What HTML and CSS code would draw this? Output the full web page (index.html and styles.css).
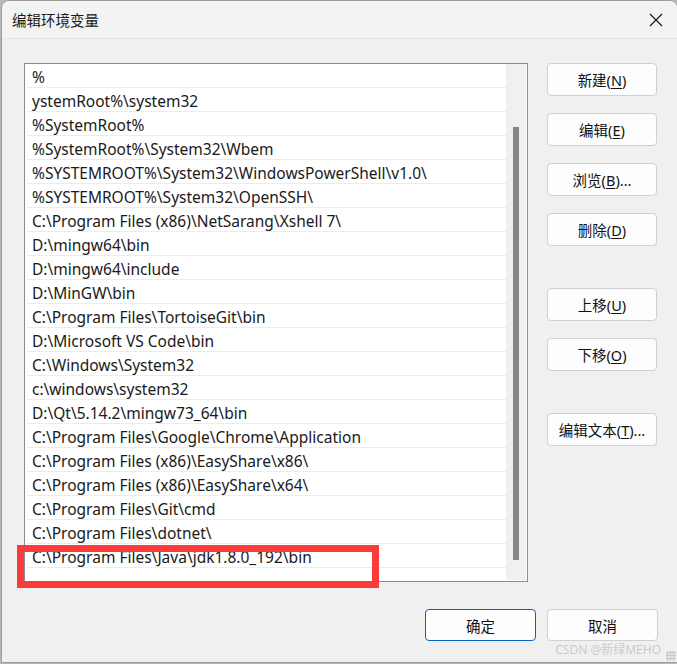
FILE: index.html
```html
<!DOCTYPE html>
<html lang="zh-CN">
<head>
  <meta charset="UTF-8" />
  <title>编辑环境变量</title>
  <link rel="stylesheet" href="styles.css">
</head>
<body>
  <div class="window">
    <div class="titlebar">
      <span class="title">编辑环境变量</span>
      <svg class="close" width="14" height="14" viewBox="0 0 14 14">
        <path d="M1 1 L13 13 M13 1 L1 13" stroke="#1a1a1a" stroke-width="1.2" fill="none" />
      </svg>
    </div>

    <div class="content">
      <div class="main">
        <div class="listbox">
          <div class="rows">
            <div class="row">%</div>
            <div class="row">ystemRoot%\system32</div>
            <div class="row">%SystemRoot%</div>
            <div class="row">%SystemRoot%\System32\Wbem</div>
            <div class="row">%SYSTEMROOT%\System32\WindowsPowerShell\v1.0\</div>
            <div class="row">%SYSTEMROOT%\System32\OpenSSH\</div>
            <div class="row">C:\Program Files (x86)\NetSarang\Xshell 7\</div>
            <div class="row">D:\mingw64\bin</div>
            <div class="row">D:\mingw64\include</div>
            <div class="row">D:\MinGW\bin</div>
            <div class="row">C:\Program Files\TortoiseGit\bin</div>
            <div class="row">D:\Microsoft VS Code\bin</div>
            <div class="row">C:\Windows\System32</div>
            <div class="row">c:\windows\system32</div>
            <div class="row">D:\Qt\5.14.2\mingw73_64\bin</div>
            <div class="row">C:\Program Files\Google\Chrome\Application</div>
            <div class="row">C:\Program Files (x86)\EasyShare\x86\</div>
            <div class="row">C:\Program Files (x86)\EasyShare\x64\</div>
            <div class="row">C:\Program Files\Git\cmd</div>
            <div class="row">C:\Program Files\dotnet\</div>
            <div class="row">C:\Program Files\Java\jdk1.8.0_192\bin</div>
          </div>
          <div class="scrollbar">
            <div class="thumb"></div>
          </div>
        </div>

        <div class="side">
          <div class="group">
            <button class="btn">新建(<u>N</u>)</button>
            <button class="btn">编辑(<u>E</u>)</button>
            <button class="btn">浏览(<u>B</u>)...</button>
            <button class="btn">删除(<u>D</u>)</button>
          </div>
          <div class="group">
            <button class="btn">上移(<u>U</u>)</button>
            <button class="btn">下移(<u>O</u>)</button>
          </div>
          <div class="group">
            <button class="btn">编辑文本(<u>T</u>)...</button>
          </div>
        </div>
      </div>

      <div class="footer">
        <button class="btn wide default">确定</button>
        <button class="btn wide">取消</button>
      </div>
    </div>

    <div class="highlight"></div>
    <div class="watermark">CSDN @新绿MEHO</div>
    <div class="grip"></div>
  </div>
</body>
</html>
```

FILE: styles.css
```css
body {
  margin: 0;
  padding: 0;
  background: #b8b8b8;
  font-family: "Noto Sans", "Noto Sans CJK SC", sans-serif;
  color: #1a1a1a;
}

.window {
  position: relative;
  box-sizing: border-box;
  width: 677px;
  height: 663px;
  margin-left: 1px;
  background: #f0f0f0;
  border: 1px solid #9c9c9c;
  border-radius: 8px 8px 0 0;
  overflow: hidden;
}

.titlebar {
  height: 37px;
  background: #f3f3f3;
  border-bottom: 1px solid #e6e6e6;
  display: flex;
  align-items: center;
  justify-content: space-between;
  padding: 0 14px 0 10px;
}

.title {
  font-family: "Noto Sans CJK SC", sans-serif;
  font-size: 14.5px;
}

.close {
  margin-top: 1px;
}

.content {
  padding: 24px 0 0 22px;
}

.main {
  display: flex;
  gap: 19px;
}

.listbox {
  box-sizing: border-box;
  width: 504px;
  height: 519px;
  border: 1px solid #8a8a9a;
  background: #fff;
  display: flex;
  padding: 0 1px 1px 1px;
}

.rows {
  flex: 1;
  padding-left: 1px;
}

.row {
  height: 23px;
  border-bottom: 1px solid #ececec;
  padding-left: 5px;
  font-size: 15.5px;
  line-height: 27px;
  white-space: nowrap;
  overflow: hidden;
}

.scrollbar {
  width: 20px;
  background: #f0f0f0;
}

.thumb {
  width: 6px;
  height: 433px;
  margin: 63px 0 0 7px;
  background: #858585;
}

.side {
  display: flex;
  flex-direction: column;
  gap: 42px;
}

.group {
  display: flex;
  flex-direction: column;
  gap: 17px;
}

.btn {
  box-sizing: border-box;
  width: 110px;
  height: 33px;
  border: 1px solid #d0d0d0;
  border-radius: 4px;
  background: #fdfdfd;
  font-family: "Noto Sans", "Noto Sans CJK SC", sans-serif;
  font-size: 14.5px;
  color: #111;
  padding: 0;
}

.btn u {
  text-decoration-thickness: 1px;
  text-underline-offset: 2px;
}

.footer {
  display: flex;
  gap: 11px;
  margin-top: 27px;
  padding-left: 401px;
}

.wide {
  width: 111px;
  height: 32px;
}

.default {
  border: 1px solid #0067c0;
}

.highlight {
  position: absolute;
  left: 15px;
  top: 544px;
  width: 362px;
  height: 43px;
  box-sizing: border-box;
  border: 7px solid #fb3a3a;
}

.watermark {
  position: absolute;
  right: 16px;
  bottom: 4px;
  font-size: 12px;
  color: #c8c8c8;
  font-family: "Noto Sans", "Noto Sans CJK SC", sans-serif;
  text-shadow: 0 0 1px #fff;
}

.grip {
  position: absolute;
  right: 1px;
  bottom: 1px;
  width: 10px;
  height: 10px;
  background: radial-gradient(circle, #c8c8c8 1px, transparent 1.5px) 0 0 / 3px 3px;
}
```
